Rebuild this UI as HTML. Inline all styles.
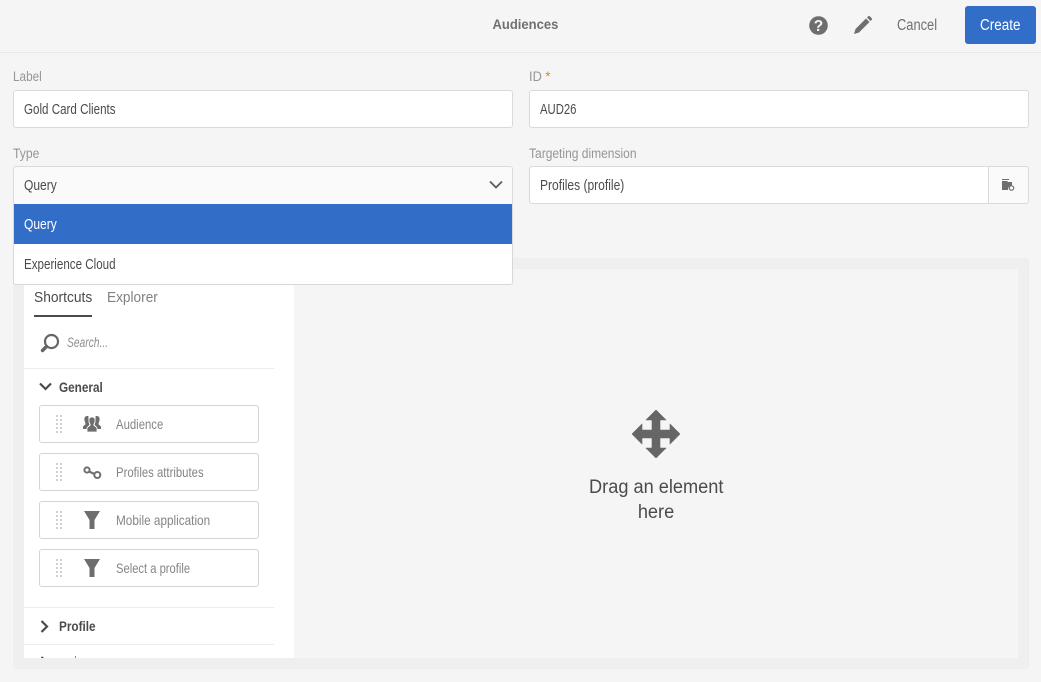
<!DOCTYPE html>
<html><head><meta charset="utf-8"><style>
html,body{margin:0;padding:0}
body{width:1041px;height:682px;position:relative;overflow:hidden;background:#f5f5f5;font-family:"Liberation Sans",sans-serif;color:#4b4b4b}
.a{position:absolute;white-space:nowrap}
.s{display:inline-block;transform:scaleX(var(--x));transform-origin:0 50%}
.c{display:inline-block;transform:scaleX(var(--x));transform-origin:50% 50%}
.lab{font-size:13.5px;color:#969696;line-height:16px}
.inp{position:absolute;box-sizing:border-box;background:#fff;border:1px solid #dadada;border-radius:3px;font-size:14.5px;color:#4b4b4b;padding-left:10px;line-height:39px;white-space:nowrap}
.item{position:absolute;left:39px;width:220px;height:38px;box-sizing:border-box;border:1px solid #d4d4d4;border-radius:3px;background:#fff}
.item .t{position:absolute;left:76px;top:9px;font-size:14px;line-height:18px;color:#858585;white-space:nowrap}
.item svg{position:absolute}
.grip{left:15px;top:9px}
.ico{left:41px;top:7px}
.hr{position:absolute;height:1px;background:#ececec;left:24px;width:250px}
</style></head><body>

<div class="a" style="left:0;top:0;width:1041px;height:52px;border-bottom:1px solid #e8e8e8"></div>
<div class="a" style="left:425px;width:200px;text-align:center;top:15px;font-size:14px;line-height:18px;font-weight:bold;color:#707070"><span class="c" style="--x:.93">Audiences</span></div>
<svg class="a" style="left:809px;top:16px" width="19" height="19" viewBox="0 0 19 19"><circle cx="9.5" cy="9.500" r="9.300" fill="#6e6e6e"/><text x="9.5" y="15" font-family="Liberation Sans" font-size="15.500" font-weight="bold" fill="#f5f5f5" text-anchor="middle">?</text></svg>
<svg class="a" style="left:853px;top:15px" width="20" height="20" viewBox="0 0 20 20"><path d="M1 19l1.500-5L13 3.500 16.500 7 6 17.500zM14 2.500l1.300-1.300a1 1 0 0 1 1.400 0l2.100 2.100a1 1 0 0 1 0 1.400L17.500 6z" fill="#6e6e6e"/></svg>
<div class="a" style="left:897px;top:17px;font-size:15.5px;line-height:18px;color:#707070"><span class="s" style="--x:.83">Cancel</span></div>
<div class="a" style="left:965px;top:6px;width:71px;height:38px;background:#326ec8;border-radius:3px;color:#fff;font-size:15.5px;line-height:39px;text-align:center"><span class="c" style="--x:.87">Create</span></div>

<div class="a lab" style="left:13px;top:69px"><span class="s" style="--x:.87">Label</span></div>
<div class="inp" style="left:13px;top:90px;width:500px;height:38px"><span class="s" style="--x:.80">Gold Card Clients</span></div>
<div class="a lab" style="left:529px;top:69px"><span class="s" style="--x:.95">ID <span style="color:#e68619">*</span></span></div>
<div class="inp" style="left:529px;top:90px;width:500px;height:38px"><span class="s" style="--x:.78">AUD26</span></div>
<div class="a lab" style="left:13px;top:146px"><span class="s" style="--x:.9">Type</span></div>
<div class="a lab" style="left:529px;top:146px"><span class="s" style="--x:.89">Targeting dimension</span></div>
<div class="inp" style="left:529px;top:166px;width:460px;height:38px;border-radius:3px 0 0 3px;line-height:38px"><span class="s" style="--x:.83">Profiles (profile)</span></div>
<div class="a" style="left:988px;top:166px;width:41px;height:38px;box-sizing:border-box;background:#fafafa;border:1px solid #dadada;border-radius:0 3px 3px 0"></div>
<svg class="a" style="left:1002px;top:179px" width="13" height="13" viewBox="0 0 13 13"><path d="M0 0h7v1H0zM0 2h5l1 1h4v3.500A3.500 3.500 0 0 0 6.200 11H0z" fill="#6e6e6e"/><circle cx="9.500" cy="9" r="2.200" fill="none" stroke="#6e6e6e" stroke-width="1.200"/></svg>

<div class="a" style="left:13px;top:258px;width:1016px;height:411px;background:#efefef;border-radius:3px"></div>
<div class="a" style="left:24px;top:269px;width:994px;height:389px;background:#f5f5f5"></div>
<div class="a" style="left:24px;top:269px;width:270px;height:389px;background:#fff;overflow:hidden">
  <svg class="a" style="left:16px;top:387px" width="10" height="13" viewBox="0 0 10 13"><path d="M1.500 1l5.500 5.500L1.500 12" fill="none" stroke="#4b4b4b" stroke-width="2"/></svg>
  <div class="a" style="left:51px;top:387px;width:1px;height:2px;background:#888"></div>
</div>

<div class="a" style="left:34px;top:289px;font-size:15px;line-height:18px;color:#4b4b4b"><span class="s" style="--x:.92">Shortcuts</span></div>
<div class="a" style="left:107px;top:289px;font-size:15px;line-height:18px;color:#808080"><span class="s" style="--x:.91">Explorer</span></div>
<div class="a" style="left:34px;top:315px;width:58px;height:2px;background:#4b4b4b"></div>
<svg class="a" style="left:40px;top:333px" width="20" height="20" viewBox="0 0 20 20"><circle cx="11.500" cy="8.500" r="6.500" fill="none" stroke="#666" stroke-width="2.200"/><path d="M6.500 13.500L2.500 17.500" stroke="#666" stroke-width="3.400" stroke-linecap="round"/></svg>
<div class="a" style="left:67px;top:334px;font-size:13.5px;line-height:18px;font-style:italic;color:#8e8e8e"><span class="s" style="--x:.76">Search...</span></div>
<div class="hr" style="top:368px"></div>
<svg class="a" style="left:39px;top:382px" width="13" height="10" viewBox="0 0 13 10"><path d="M1 1.500l5.500 5.500L12 1.500" fill="none" stroke="#4b4b4b" stroke-width="2.200"/></svg>
<div class="a" style="left:59px;top:379px;font-size:13.5px;line-height:18px;font-weight:bold;color:#4b4b4b"><span class="s" style="--x:.87">General</span></div>

<div class="item" style="top:405px"><svg class="grip" width="8" height="19"><g fill="#d0d0d0"><rect x="1" y="0" width="2" height="2"/><rect x="5" y="0" width="2" height="2"/><rect x="1" y="4" width="2" height="2"/><rect x="5" y="4" width="2" height="2"/><rect x="1" y="8" width="2" height="2"/><rect x="5" y="8" width="2" height="2"/><rect x="1" y="12" width="2" height="2"/><rect x="5" y="12" width="2" height="2"/><rect x="1" y="16" width="2" height="2"/><rect x="5" y="16" width="2" height="2"/></g></svg>
<svg class="ico" width="22" height="22" viewBox="0 0 22 22"><path d="M6.500 3C4.500 3 2.900 4 3.500 7.500c.3 1.500 1 2.500 1 3.500S2 12.500 2 14v2h3.500l1-2 2-2.500C8 10.500 7.500 9 7.500 7c0-2-.2-3 0-4zM15.500 3c2 0 3.600 1 3 4.500-.3 1.500-1 2.500-1 3.500s2.500 1.500 2.500 3v2h-3.500l-1-2-2-2.500c.5-1 1-2.500 1-4.500 0-2 .2-3 0-4z" fill="#6e6e6e"/><path d="M11 4c2.500 0 3.500 1.500 3 4.500-.3 1.500-1.200 2.500-1.200 3.500s3.200 1.500 3.200 3.500V19H6v-3.500C6 13.500 9.200 13 9.200 12S8.300 10 8 8.500C7.500 5.500 8.500 4 11 4z" fill="#6e6e6e" stroke="#fff" stroke-width=".8"/></svg>
<div class="t"><span class="s" style="--x:.81">Audience</span></div></div>

<div class="item" style="top:453px"><svg class="grip" width="8" height="19"><g fill="#d0d0d0"><rect x="1" y="0" width="2" height="2"/><rect x="5" y="0" width="2" height="2"/><rect x="1" y="4" width="2" height="2"/><rect x="5" y="4" width="2" height="2"/><rect x="1" y="8" width="2" height="2"/><rect x="5" y="8" width="2" height="2"/><rect x="1" y="12" width="2" height="2"/><rect x="5" y="12" width="2" height="2"/><rect x="1" y="16" width="2" height="2"/><rect x="5" y="16" width="2" height="2"/></g></svg>
<svg class="ico" width="22" height="22" viewBox="0 0 22 22"><circle cx="6" cy="9" r="2.600" fill="none" stroke="#6e6e6e" stroke-width="2"/><circle cx="16.300" cy="14" r="3" fill="none" stroke="#6e6e6e" stroke-width="2"/><path d="M8 10.500l5.500 2.500" stroke="#6e6e6e" stroke-width="2.200"/></svg>
<div class="t"><span class="s" style="--x:.81">Profiles attributes</span></div></div>

<div class="item" style="top:501px"><svg class="grip" width="8" height="19"><g fill="#d0d0d0"><rect x="1" y="0" width="2" height="2"/><rect x="5" y="0" width="2" height="2"/><rect x="1" y="4" width="2" height="2"/><rect x="5" y="4" width="2" height="2"/><rect x="1" y="8" width="2" height="2"/><rect x="5" y="8" width="2" height="2"/><rect x="1" y="12" width="2" height="2"/><rect x="5" y="12" width="2" height="2"/><rect x="1" y="16" width="2" height="2"/><rect x="5" y="16" width="2" height="2"/></g></svg>
<svg class="ico" width="22" height="22" viewBox="0 0 22 22"><path d="M3 2h16l-5.500 9v9h-5v-9z" fill="#6e6e6e"/></svg>
<div class="t"><span class="s" style="--x:.84">Mobile application</span></div></div>

<div class="item" style="top:549px"><svg class="grip" width="8" height="19"><g fill="#d0d0d0"><rect x="1" y="0" width="2" height="2"/><rect x="5" y="0" width="2" height="2"/><rect x="1" y="4" width="2" height="2"/><rect x="5" y="4" width="2" height="2"/><rect x="1" y="8" width="2" height="2"/><rect x="5" y="8" width="2" height="2"/><rect x="1" y="12" width="2" height="2"/><rect x="5" y="12" width="2" height="2"/><rect x="1" y="16" width="2" height="2"/><rect x="5" y="16" width="2" height="2"/></g></svg>
<svg class="ico" width="22" height="22" viewBox="0 0 22 22"><path d="M3 2h16l-5.500 9v9h-5v-9z" fill="#6e6e6e"/></svg>
<div class="t"><span class="s" style="--x:.80">Select a profile</span></div></div>

<div class="hr" style="top:607px"></div>
<svg class="a" style="left:40px;top:620px" width="10" height="13" viewBox="0 0 10 13"><path d="M1.500 1l5.500 5.500L1.500 12" fill="none" stroke="#4b4b4b" stroke-width="2.200"/></svg>
<div class="a" style="left:59px;top:618px;font-size:13.500px;line-height:18px;font-weight:bold;color:#4b4b4b"><span class="s" style="--x:.87">Profile</span></div>
<div class="hr" style="top:644px"></div>

<svg class="a" style="left:632px;top:410px" width="48" height="48" viewBox="0 0 48 48"><path d="M24 0l10 10h-6v10h10v-6l10 10-10 10v-6H28v10h6L24 48 14 38h6V28H10v6L0 24l10-10v6h10V10h-6z" fill="#666" stroke="#666" stroke-width=".6" stroke-linejoin="round"/></svg>
<div class="a" style="left:556px;top:475px;width:200px;text-align:center;white-space:normal;font-size:19px;line-height:25px;color:#4b4b4b"><span class="c" style="--x:.957">Drag an element</span><br><span class="c" style="--x:.957">here</span></div>

<div class="a" style="left:13px;top:166px;width:500px;height:38px;box-sizing:border-box;background:#fafafa;border:1px solid #dadada;border-bottom:0;border-radius:3px 3px 0 0;font-size:14.5px;padding-left:10px;line-height:38px;color:#4b4b4b"><span class="s" style="--x:.83">Query</span></div>
<svg class="a" style="left:489px;top:180px" width="14" height="10" viewBox="0 0 14 10"><path d="M1 1.500l6 6 6-6" fill="none" stroke="#5c5c5c" stroke-width="1.800"/></svg>
<div class="a" style="left:13px;top:204px;width:500px;height:81px;box-sizing:border-box;background:#fff;border:1px solid #d8d8d8;border-top:0;border-radius:0 0 3px 3px"></div>
<div class="a" style="left:14px;top:204px;width:498px;height:40px;background:#326ec8;color:#fff;font-size:14.5px;line-height:43px;padding-left:10px;box-sizing:border-box"><span class="s" style="--x:.83">Query</span></div>
<div class="a" style="left:24px;top:244px;font-size:14.5px;line-height:43px;color:#4b4b4b"><span class="s" style="--x:.80">Experience Cloud</span></div>
</body></html>
